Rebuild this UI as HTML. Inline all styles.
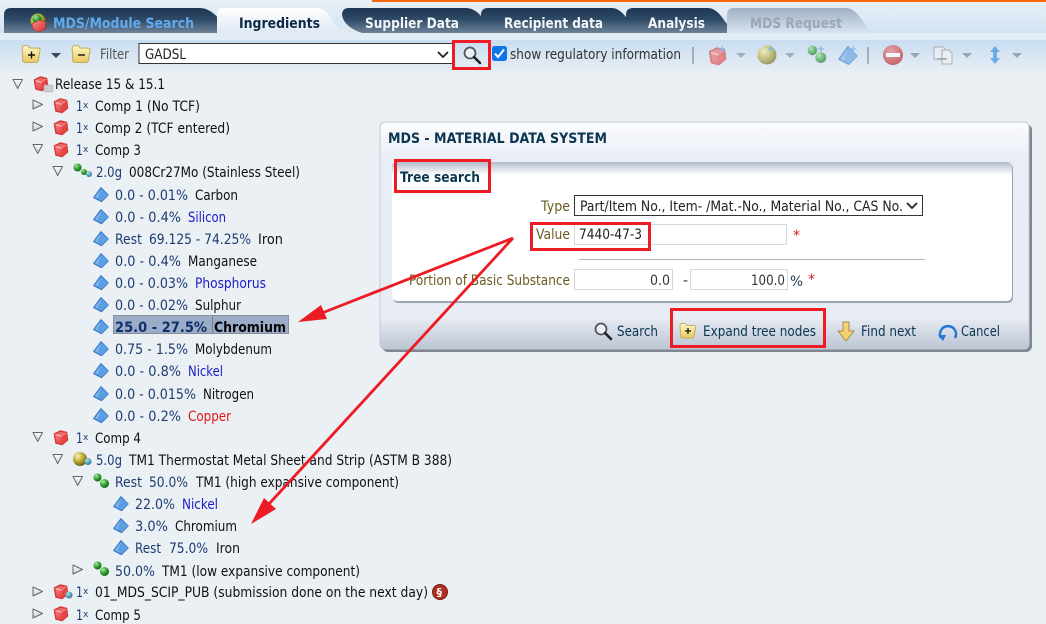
<!DOCTYPE html>
<html><head><meta charset="utf-8"><title>MDS</title>
<style>
html,body{margin:0;padding:0;background:#ebf0f5;width:1046px;height:624px;overflow:hidden}
svg{display:block}
text{font-family:"DejaVu Sans","Liberation Sans",sans-serif;font-size:14px;fill:#111;white-space:pre}
.n{fill:#1d3b70}.b{fill:#1c1cc4}.r{fill:#e01818}.k{fill:#0b3650}.l{fill:#6a5a22}.g{fill:#555}
.x{font-size:9px;fill:#1d3b70}
.bd{font-weight:bold}
</style></head><body>
<svg width="1046" height="624" viewBox="0 0 1046 624" xmlns="http://www.w3.org/2000/svg">
<defs>
<linearGradient id="top" x1="0" y1="0" x2="0" y2="1"><stop offset="0" stop-color="#e9f0f7"/><stop offset="1" stop-color="#d3e3f3"/></linearGradient>
<linearGradient id="tb" x1="0" y1="0" x2="0" y2="1"><stop offset="0" stop-color="#c9ddf1"/><stop offset="1" stop-color="#ebf0f5"/></linearGradient>
<linearGradient id="dark" x1="0" y1="0" x2="0" y2="1"><stop offset="0" stop-color="#1d3650"/><stop offset=".45" stop-color="#2e4a66"/><stop offset="1" stop-color="#6e8298"/></linearGradient>
<linearGradient id="act" x1="0" y1="0" x2="0" y2="1"><stop offset="0" stop-color="#fff"/><stop offset="1" stop-color="#dfe9f4"/></linearGradient>
<linearGradient id="dis" x1="0" y1="0" x2="0" y2="1"><stop offset="0" stop-color="#9fb0c3"/><stop offset="1" stop-color="#d8e4f0"/></linearGradient>
<linearGradient id="dlg" x1="0" y1="0" x2="0" y2="1"><stop offset="0" stop-color="#fbfcfe"/><stop offset=".17" stop-color="#e9edf5"/><stop offset=".86" stop-color="#e8ecf4"/><stop offset="1" stop-color="#bcc5d3"/></linearGradient>
<linearGradient id="inn" x1="0" y1="0" x2="0" y2="1"><stop offset="0" stop-color="#b4bccb"/><stop offset="1" stop-color="#fff"/></linearGradient>
<linearGradient id="cubeG" x1="0" y1="0" x2="1" y2="1"><stop offset="0" stop-color="#fb8a8a"/><stop offset="1" stop-color="#d83030"/></linearGradient>
<linearGradient id="diaG" x1="0" y1="0" x2="1" y2="1"><stop offset="0" stop-color="#a8d2f6"/><stop offset="1" stop-color="#4a8cd8"/></linearGradient>
<linearGradient id="folG" x1="0" y1="0" x2="0" y2="1"><stop offset="0" stop-color="#fff6c8"/><stop offset="1" stop-color="#e8c860"/></linearGradient>
<linearGradient id="tri" x1="0" y1="0" x2="0" y2="1"><stop offset="0" stop-color="#fff"/><stop offset="1" stop-color="#ccd"/></linearGradient>
<radialGradient id="gb" cx=".35" cy=".3" r=".8"><stop offset="0" stop-color="#a8e8a0"/><stop offset=".5" stop-color="#30a030"/><stop offset="1" stop-color="#0c5a14"/></radialGradient>
<radialGradient id="yb" cx=".35" cy=".3" r=".8"><stop offset="0" stop-color="#f8f4b0"/><stop offset=".5" stop-color="#b8a830"/><stop offset="1" stop-color="#50500c"/></radialGradient>
<radialGradient id="tb2" cx=".35" cy=".3" r=".8"><stop offset="0" stop-color="#b0e0f0"/><stop offset="1" stop-color="#18708c"/></radialGradient>
<radialGradient id="stop" cx=".4" cy=".3" r=".8"><stop offset="0" stop-color="#f08a8a"/><stop offset="1" stop-color="#b02020"/></radialGradient>

<g id="cube"><path d="M1.500 4 7.500 1 13.500 2.500 14.500 10 9 14.500 3 13z" fill="url(#cubeG)" stroke="#d63c3c" stroke-width="1.600" stroke-linejoin="round"/><path d="M2.500 4.500 8.500 6.500 13 3" stroke="#ffc4c4" stroke-width="1" fill="none"/><path d="M8.500 6.500 8.500 13.500 13.500 9.700 13 3z" fill="#e64646"/></g>
<g id="dia"><path d="M8 .8 15 8 8.500 14.500 .8 10.500z" fill="url(#diaG)" stroke="#3a7cc8" stroke-width="1.300" stroke-linejoin="round"/><path d="M8 1.500 5 10.500 8.500 14 15 8z" fill="#5c9ee4"/></g>
<g id="balls"><circle cx="4.500" cy="4.500" r="4" fill="url(#gb)"/><circle cx="11.500" cy="10.500" r="4.500" fill="url(#gb)"/></g>
<g id="ballsT"><circle cx="4.500" cy="4.500" r="4" fill="url(#gb)"/><circle cx="11" cy="9" r="3" fill="url(#gb)"/><circle cx="16" cy="11" r="3" fill="url(#tb2)"/></g>
<g id="open"><path d="M1 1.500 10.500 1.500 5.700 10.500z" fill="url(#tri)" stroke="#666" stroke-width="1" stroke-linejoin="round"/></g>
<g id="closed"><path d="M1 1 10.500 5.500 1 10z" fill="url(#tri)" stroke="#666" stroke-width="1" stroke-linejoin="round"/></g>
<g id="folder"><path d="M1 3.500q0-2 2-2h3l2 2h7q2 0 1.500 2l-1.500 9q-.3 1.500-2 1.500H3.500q-2 0-2-2z" fill="url(#folG)" stroke="#bfa34e" stroke-width=".8"/></g>
<g id="mag"><circle cx="7" cy="7" r="5.500" fill="#e9f1f7" stroke="#555" stroke-width="1.800"/><path d="M11 11l6 6" stroke="#222" stroke-width="2.600" stroke-linecap="round"/></g>
<g id="car"><path d="M0 0h10L5 5z" fill="#7c8a9a"/></g>
<g id="plus"><path d="M-3 0h6M0-3v6" stroke="#5f9ee0" stroke-width="1.200"/></g>
</defs>

<!-- backgrounds -->
<rect width="1046" height="624" fill="#ebf0f5"/>
<rect width="1046" height="33" fill="url(#top)"/>
<rect x="372" width="674" height="2" fill="#f96a10"/>
<rect y="33" width="1046" height="7" fill="#e2ecf6"/>
<rect y="40" width="1046" height="36" fill="url(#tb)"/>

<!-- tabs -->
<path d="M4 33V15q0-7 7-7H200q10 0 20 12t28 13z" fill="url(#dark)"/>
<path d="M342 33V15q0-7 7-7H466q10 0 18 12t24 13z" fill="url(#dark)"/>
<path d="M481 33V15q0-7 7-7H612q8 0 16 12t22 13z" fill="url(#dark)"/>
<path d="M626 33V15q0-7 7-7H708q8 0 16 12t22 13z" fill="url(#dark)"/>
<path d="M727 33V15q0-7 7-7H846q8 0 16 12t10 13z" fill="url(#dis)"/>
<path d="M342 15q2 12 20 18h-20z" fill="#dfe9f4"/>
<path d="M217 33V15q0-7 7-7H316q10 0 16 12t30 13z" fill="url(#act)"/>
<circle cx="38" cy="21" r="7.500" fill="url(#yb)"/><circle cx="37" cy="19" r="4.500" fill="url(#gb)"/>
<path d="M32 24l7-4 7 2-1 7-6 3-6-3z" fill="url(#cubeG)" stroke="#a02020" stroke-width=".5"/>
<text class="bd" x="53" y="28" textLength="141" lengthAdjust="spacingAndGlyphs" style="fill:#62aaee">MDS/Module Search</text>
<text class="bd" x="239" y="28" textLength="81" lengthAdjust="spacingAndGlyphs" style="fill:#0c2a48">Ingredients</text>
<text class="bd" x="365" y="28" textLength="94" lengthAdjust="spacingAndGlyphs" style="fill:#f4f7fa">Supplier Data</text>
<text class="bd" x="504" y="28" textLength="99" lengthAdjust="spacingAndGlyphs" style="fill:#f4f7fa">Recipient data</text>
<text class="bd" x="648" y="28" textLength="57" lengthAdjust="spacingAndGlyphs" style="fill:#f4f7fa">Analysis</text>
<text class="bd" x="750" y="28" textLength="92" lengthAdjust="spacingAndGlyphs" style="fill:#9aa5b6">MDS Request</text>

<!-- toolbar -->
<use href="#folder" transform="translate(21,44) scale(1.150)"/><path d="M28 55h7M31.500 51.500v7" stroke="#111" stroke-width="1.400"/>
<path d="M51 53h10l-5 5z" fill="#2c4a66"/>
<use href="#folder" transform="translate(71,44) scale(1.150)"/><path d="M78 55h7" stroke="#111" stroke-width="1.400"/>
<text class="g" x="100" y="59" textLength="29" lengthAdjust="spacingAndGlyphs">Filter</text>
<rect x="139" y="43.500" width="315" height="20" fill="#fff" stroke="#333"/>
<text x="145" y="59" textLength="41" lengthAdjust="spacingAndGlyphs" style="fill:#222">GADSL</text>
<path d="M438 52l5 5 5-5" fill="none" stroke="#222" stroke-width="1.800"/>
<use href="#mag" x="463" y="46"/>
<rect x="492" y="46" width="15" height="15" rx="2.500" fill="#0f76e8"/>
<path d="M495 53.500l3 3.500 6-7.500" fill="none" stroke="#fff" stroke-width="2"/>
<text x="510" y="59" textLength="171" lengthAdjust="spacingAndGlyphs" style="fill:#333">show regulatory information</text>
<rect x="692.500" y="47" width="1" height="17" fill="#777"/>
<g opacity=".6">
<use href="#cube" transform="translate(708,47) scale(1.200)"/><use href="#plus" x="722" y="49"/>
<use href="#car" x="736" y="53"/>
<circle cx="767" cy="55" r="9.500" fill="url(#yb)"/><use href="#plus" x="771" y="49"/>
<use href="#car" x="785" y="53"/>
<use href="#balls" transform="translate(807,45) scale(1.200)"/><use href="#plus" x="821" y="49"/>
<use href="#dia" transform="translate(838,46) scale(1.250)"/><use href="#plus" x="853" y="49"/>
</g>
<rect x="867.500" y="47" width="1" height="17" fill="#777"/>
<g opacity=".7">
<circle cx="893" cy="55" r="10" fill="url(#stop)"/><rect x="886" y="53" width="14" height="4" fill="#fff"/>
<use href="#car" x="910" y="53"/>
<path d="M934 47h9l2 2v3h-3v7h-8z" fill="#eef2f6" stroke="#999"/><path d="M942 50h7l3 3v11h-10z" fill="#eef2f6" stroke="#999"/><path d="M937 59h10" stroke="#666" stroke-width="1.200"/>
<use href="#car" x="962" y="53"/>
<path d="M995 46l5 6h-3v6h3l-5 6-5-6h3v-6h-3z" fill="#3f93e6"/>
<use href="#car" x="1012" y="53"/>
</g>

<!-- tree -->
<use href="#open" x="12" y="78"/><use href="#cube" x="33" y="76"/><rect x="44" y="85" width="9" height="7" rx="1" fill="#ccc" stroke="#aaa" stroke-width=".5"/>
<text x="55" y="89" textLength="110" lengthAdjust="spacingAndGlyphs">Release 15 &amp; 15.1</text>

<use href="#closed" x="32" y="99"/><use href="#cube" x="53" y="98"/><text class="n" x="76" y="111" textLength="7" lengthAdjust="spacingAndGlyphs">1</text><text class="x" x="83" y="108">x</text>
<text x="95" y="111" textLength="105" lengthAdjust="spacingAndGlyphs">Comp 1 (No TCF)</text>

<use href="#closed" x="32" y="121"/><use href="#cube" x="53" y="120"/><text class="n" x="76" y="133" textLength="7" lengthAdjust="spacingAndGlyphs">1</text><text class="x" x="83" y="130">x</text>
<text x="95" y="133" textLength="135" lengthAdjust="spacingAndGlyphs">Comp 2 (TCF entered)</text>

<use href="#open" x="32" y="143"/><use href="#cube" x="53" y="142"/><text class="n" x="76" y="155" textLength="7" lengthAdjust="spacingAndGlyphs">1</text><text class="x" x="83" y="152">x</text>
<text x="95" y="155" textLength="46" lengthAdjust="spacingAndGlyphs">Comp 3</text>

<use href="#open" x="52" y="165"/><use href="#ballsT" x="73" y="163"/>
<text class="n" x="96" y="177" textLength="26" lengthAdjust="spacingAndGlyphs">2.0g</text>
<text x="129" y="177" textLength="171" lengthAdjust="spacingAndGlyphs">008Cr27Mo (Stainless Steel)</text>

<use href="#dia" x="93" y="187"/><text class="n" x="115" y="200" textLength="73" lengthAdjust="spacingAndGlyphs">0.0 - 0.01%</text><text x="195" y="200" textLength="43" lengthAdjust="spacingAndGlyphs">Carbon</text>
<use href="#dia" x="93" y="209"/><text class="n" x="115" y="222" textLength="66" lengthAdjust="spacingAndGlyphs">0.0 - 0.4%</text><text class="b" x="188" y="222" textLength="38" lengthAdjust="spacingAndGlyphs">Silicon</text>
<use href="#dia" x="93" y="231"/><text class="n" x="115" y="244" textLength="27" lengthAdjust="spacingAndGlyphs">Rest</text><text class="n" x="149" y="244" textLength="102" lengthAdjust="spacingAndGlyphs">69.125 - 74.25%</text><text x="258" y="244" textLength="25" lengthAdjust="spacingAndGlyphs">Iron</text>
<use href="#dia" x="93" y="253"/><text class="n" x="115" y="266" textLength="66" lengthAdjust="spacingAndGlyphs">0.0 - 0.4%</text><text x="188" y="266" textLength="69" lengthAdjust="spacingAndGlyphs">Manganese</text>
<use href="#dia" x="93" y="275"/><text class="n" x="115" y="288" textLength="73" lengthAdjust="spacingAndGlyphs">0.0 - 0.03%</text><text class="b" x="195" y="288" textLength="71" lengthAdjust="spacingAndGlyphs">Phosphorus</text>
<use href="#dia" x="93" y="297"/><text class="n" x="115" y="310" textLength="73" lengthAdjust="spacingAndGlyphs">0.0 - 0.02%</text><text x="195" y="310" textLength="46" lengthAdjust="spacingAndGlyphs">Sulphur</text>

<use href="#dia" x="93" y="319"/>
<rect x="113.500" y="315.500" width="175" height="18" fill="#9bacc8" stroke="#8a8f98"/>
<rect x="212" y="316" width="1" height="17" fill="#777f8c"/>
<text class="bd" x="115" y="332" textLength="92" lengthAdjust="spacingAndGlyphs" style="fill:#0f2f6c">25.0 - 27.5%</text>
<text class="bd" x="214" y="332" textLength="72" lengthAdjust="spacingAndGlyphs" style="fill:#050505">Chromium</text>

<use href="#dia" x="93" y="341"/><text class="n" x="115" y="354" textLength="73" lengthAdjust="spacingAndGlyphs">0.75 - 1.5%</text><text x="195" y="354" textLength="77" lengthAdjust="spacingAndGlyphs">Molybdenum</text>
<use href="#dia" x="93" y="363"/><text class="n" x="115" y="376" textLength="66" lengthAdjust="spacingAndGlyphs">0.0 - 0.8%</text><text class="b" x="188" y="376" textLength="35" lengthAdjust="spacingAndGlyphs">Nickel</text>
<use href="#dia" x="93" y="386"/><text class="n" x="115" y="399" textLength="81" lengthAdjust="spacingAndGlyphs">0.0 - 0.015%</text><text x="203" y="399" textLength="51" lengthAdjust="spacingAndGlyphs">Nitrogen</text>
<use href="#dia" x="93" y="408"/><text class="n" x="115" y="421" textLength="66" lengthAdjust="spacingAndGlyphs">0.0 - 0.2%</text><text class="r" x="188" y="421" textLength="43" lengthAdjust="spacingAndGlyphs">Copper</text>

<use href="#open" x="32" y="431"/><use href="#cube" x="53" y="430"/><text class="n" x="76" y="443" textLength="7" lengthAdjust="spacingAndGlyphs">1</text><text class="x" x="83" y="440">x</text>
<text x="95" y="443" textLength="46" lengthAdjust="spacingAndGlyphs">Comp 4</text>

<use href="#open" x="52" y="453"/><circle cx="80" cy="459" r="7" fill="url(#yb)"/><circle cx="88" cy="461.500" r="3.500" fill="url(#tb2)"/>
<text class="n" x="96" y="465" textLength="26" lengthAdjust="spacingAndGlyphs">5.0g</text>
<text x="129" y="465" textLength="323" lengthAdjust="spacingAndGlyphs">TM1 Thermostat Metal Sheet and Strip (ASTM B 388)</text>

<use href="#open" x="72" y="475"/><use href="#balls" x="93" y="473"/>
<text class="n" x="115" y="487" textLength="27" lengthAdjust="spacingAndGlyphs">Rest</text><text class="n" x="149" y="487" textLength="39" lengthAdjust="spacingAndGlyphs">50.0%</text>
<text x="196" y="487" textLength="203" lengthAdjust="spacingAndGlyphs">TM1 (high expansive component)</text>

<use href="#dia" x="113" y="496"/><text class="n" x="135" y="509" textLength="40" lengthAdjust="spacingAndGlyphs">22.0%</text><text class="b" x="182" y="509" textLength="36" lengthAdjust="spacingAndGlyphs">Nickel</text>
<use href="#dia" x="113" y="518"/><text class="n" x="135" y="531" textLength="33" lengthAdjust="spacingAndGlyphs">3.0%</text><text x="175" y="531" textLength="62" lengthAdjust="spacingAndGlyphs">Chromium</text>
<use href="#dia" x="113" y="540"/><text class="n" x="135" y="553" textLength="26" lengthAdjust="spacingAndGlyphs">Rest</text><text class="n" x="169" y="553" textLength="39" lengthAdjust="spacingAndGlyphs">75.0%</text><text x="216" y="553" textLength="24" lengthAdjust="spacingAndGlyphs">Iron</text>

<use href="#closed" x="72" y="564"/><use href="#balls" x="93" y="561"/>
<text class="n" x="115" y="576" textLength="40" lengthAdjust="spacingAndGlyphs">50.0%</text>
<text x="162" y="576" textLength="198" lengthAdjust="spacingAndGlyphs">TM1 (low expansive component)</text>

<use href="#closed" x="32" y="586"/><use href="#cube" x="53" y="584"/><circle cx="69" cy="595" r="3.500" fill="url(#tb2)"/>
<text class="n" x="76" y="597" textLength="7" lengthAdjust="spacingAndGlyphs">1</text><text class="x" x="83" y="594">x</text>
<text x="95" y="597" textLength="333" lengthAdjust="spacingAndGlyphs">01_MDS_SCIP_PUB (submission done on the next day)</text>
<circle cx="440" cy="592" r="7.500" fill="#b03020" stroke="#702015"/>
<text x="436.500" y="596" style="font-size:11px;fill:#fff;font-weight:bold">§</text>

<use href="#closed" x="32" y="608"/><use href="#cube" x="53" y="606"/><text class="n" x="76" y="620" textLength="7" lengthAdjust="spacingAndGlyphs">1</text><text class="x" x="83" y="617">x</text>
<text x="95" y="620" textLength="46" lengthAdjust="spacingAndGlyphs">Comp 5</text>

<!-- dialog -->
<rect x="382" y="124" width="650" height="228" rx="6" fill="#5c636d" opacity=".75"/>
<rect x="380" y="122" width="649" height="227" rx="5" fill="url(#dlg)" stroke="#c3cad6"/>
<text class="bd k" x="388" y="143" textLength="219" lengthAdjust="spacingAndGlyphs">MDS - MATERIAL DATA SYSTEM</text>
<rect x="393" y="163" width="620" height="140" rx="5" fill="#9ea4ae"/>
<rect x="392" y="162" width="620" height="139" rx="5" fill="#fff"/>
<path d="M392 175v-8q0-5 5-5H1007q5 0 5 5v8z" fill="url(#inn)"/>
<text class="bd k" x="400" y="182" textLength="80" lengthAdjust="spacingAndGlyphs">Tree search</text>

<text class="l" x="541" y="211" textLength="29" lengthAdjust="spacingAndGlyphs">Type</text>
<rect x="574.500" y="195.500" width="348" height="20" fill="#fff" stroke="#333"/>
<text x="580" y="211" textLength="323" lengthAdjust="spacingAndGlyphs" style="fill:#222">Part/Item No., Item- /Mat.-No., Material No., CAS No.</text>
<path d="M907 203l5 5 5-5" fill="none" stroke="#222" stroke-width="1.800"/>

<text class="l" x="536" y="239" textLength="34" lengthAdjust="spacingAndGlyphs">Value</text>
<rect x="574.500" y="224.500" width="212" height="20" fill="#fff" stroke="#d5d8dc"/>
<text x="579" y="239" textLength="63" lengthAdjust="spacingAndGlyphs" style="fill:#222">7440-47-3</text>
<text class="r" x="793" y="240">*</text>

<rect x="579" y="259" width="346" height="1" fill="#b0b4ba"/>

<text class="l" x="409" y="285" textLength="161" lengthAdjust="spacingAndGlyphs">Portion of Basic Substance</text>
<rect x="574.500" y="269.500" width="98" height="20" fill="#fff" stroke="#d5d8dc"/>
<text x="650" y="285" textLength="20" lengthAdjust="spacingAndGlyphs" style="fill:#333">0.0</text>
<text x="683" y="285" style="fill:#333">-</text>
<rect x="690.500" y="269.500" width="97" height="20" fill="#fff" stroke="#d5d8dc"/>
<text x="751" y="285" textLength="34" lengthAdjust="spacingAndGlyphs" style="fill:#333">100.0</text>
<text x="790" y="286" textLength="13" lengthAdjust="spacingAndGlyphs" style="fill:#1d3b50">%</text>
<text class="r" x="808" y="284">*</text>

<use href="#mag" x="594" y="322"/>
<text class="k" x="617" y="336" textLength="41" lengthAdjust="spacingAndGlyphs">Search</text>
<use href="#folder" x="679" y="322"/><path d="M685 331h6M688 328v6" stroke="#111" stroke-width="1.300"/>
<text class="k" x="703" y="336" textLength="113" lengthAdjust="spacingAndGlyphs">Expand tree nodes</text>
<path d="M843 322h6v9h5l-8 10-8-10h5z" fill="#f2d272" stroke="#a98b3c" stroke-width="1"/>
<text class="k" x="861" y="336" textLength="55" lengthAdjust="spacingAndGlyphs">Find next</text>
<path d="M941 338a8 8 0 1 1 14 0" fill="none" stroke="#1e78d6" stroke-width="2.400"/>
<path d="M938 335h8l-3 6z" fill="#1e78d6"/>
<text class="k" x="961" y="336" textLength="39" lengthAdjust="spacingAndGlyphs">Cancel</text>

<!-- red annotations -->
<g fill="none" stroke="#ed1c24" stroke-width="3">
<rect x="453.500" y="41.500" width="36" height="27"/>
<rect x="395.500" y="160.500" width="94" height="31"/>
<rect x="531.500" y="223.500" width="118" height="26"/>
<rect x="671.500" y="309.500" width="153" height="37"/>
<path d="M513 238 322 313M513 238 268 505" stroke-width="2.800"/>
</g>
<path d="M298 322 327 319 321 305z" fill="#ed1c24"/>
<path d="M251 524 276 509 264 498z" fill="#ed1c24"/>
</svg>
</body></html>
